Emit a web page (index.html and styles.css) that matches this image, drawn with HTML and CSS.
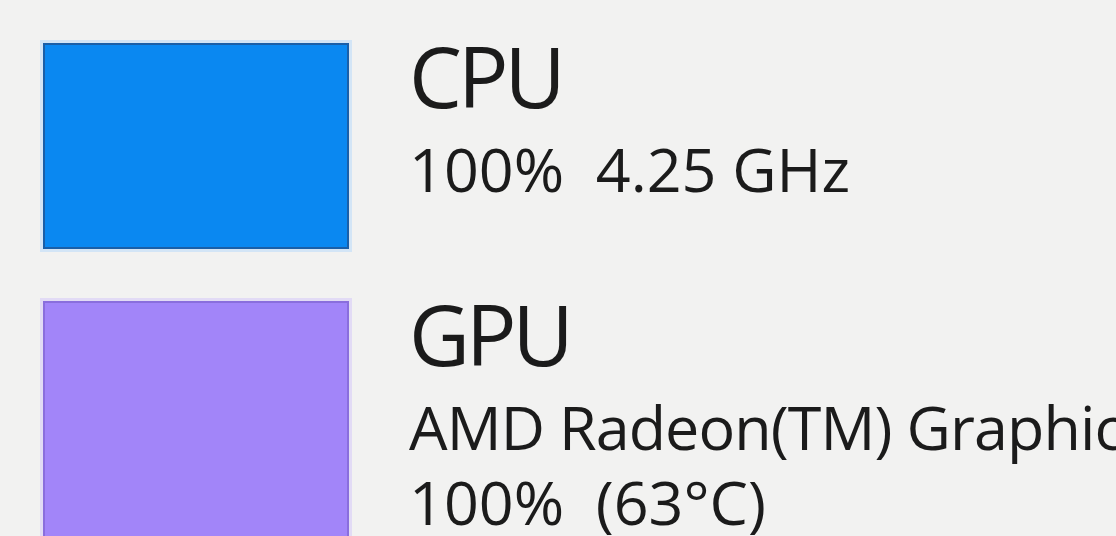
FILE: index.html
```html
<!DOCTYPE html>
<html lang="en">
<head>
<meta charset="utf-8">
<title>Performance</title>
<link rel="stylesheet" href="styles.css">
</head>
<body>
<div class="list">
  <div class="item">
    <div class="swatch swatch-cpu"></div>
    <div class="info">
      <div class="title">CPU</div>
      <div class="sub">100%  4.25 GHz</div>
    </div>
  </div>
  <div class="item">
    <div class="swatch swatch-gpu"></div>
    <div class="info">
      <div class="title">GPU</div>
      <div class="sub sub-name">AMD Radeon(TM) Graphics</div>
      <div class="sub">100%  (63°C)</div>
    </div>
  </div>
</div>
</body>
</html>
```

FILE: styles.css
```css
html, body {
  margin: 0;
  height: 100%;
}
body {
  background: #f2f2f1;
  overflow: hidden;
  font-family: "Open Sans", "Noto Sans", sans-serif;
  color: #1b1b1b;
}
.list {
  display: flex;
  flex-direction: column;
  gap: 43px;
  padding: 34px 0 0 43px;
}
.item {
  display: flex;
  gap: 60px;
  align-items: flex-start;
}
.swatch {
  flex: none;
  width: 302px;
  height: 202px;
  margin-top: 9px;
  border: 2px solid #1a5fa8;
  box-shadow: 0 0 0 3px #d3e5f6;
}
.swatch-cpu {
  background: #0a88f1;
}
.swatch-gpu {
  height: 260px;
  background: #a285f9;
  border-color: #8a6edd;
  box-shadow: 0 0 0 3px #e2dbf5;
}
.info {
  display: flex;
  flex-direction: column;
  white-space: pre;
}
.title {
  font-size: 84px;
  line-height: 84px;
  letter-spacing: -4px;
  margin-bottom: 13px;
}
.sub {
  font-size: 61px;
  line-height: 75px;
}
.sub-name {
  letter-spacing: -0.9px;
}
```
